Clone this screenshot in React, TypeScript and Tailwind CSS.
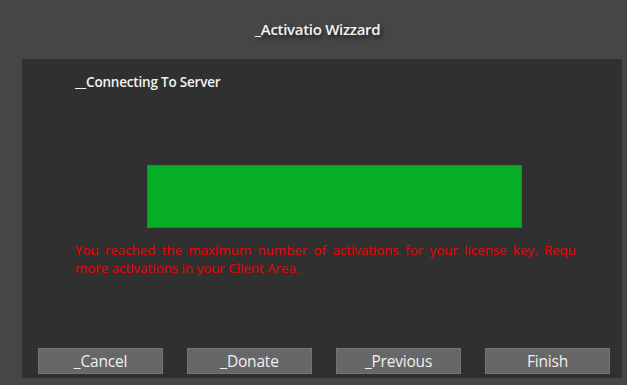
import React from 'react';

const buttons = ['_Cancel', '_Donate', '_Previous', 'Finish'];

export default function App() {
  return (
    <div
      className="w-[627px] h-[385px] bg-[#464646] flex flex-col overflow-hidden"
      style={{ fontFamily: '"Open Sans", "Noto Sans", sans-serif' }}
    >
      <div className="h-[59px] flex items-center justify-center pl-[8px]">
        <span className="text-[15px] font-semibold text-[#f4f4f4] [text-shadow:2px_3px_4px_rgba(0,0,0,0.6)] tracking-[-0.3px]">
          _Activatio Wizzard
        </span>
      </div>
      <div className="ml-[22px] w-[600px] h-[319px] bg-[#303030] flex flex-col">
        <div className="pl-[53px] pt-[14px] text-[13.5px] font-semibold text-[#f2f2f2] tracking-[-0.2px] leading-[18px]">
          __Connecting To Server
        </div>
        <div className="mt-[74px] ml-[125px] w-[375px] h-[63px] bg-[#05ae26] border border-[#3c7a44]" />
        <div className="mt-[13px] ml-[53px] w-[501px] text-[13.3px] text-[#f00000] leading-[18px]">
          <div className="whitespace-nowrap flex justify-between">
            {'You reached the maximum number of activations for your license key. Requ'.split(' ').map((w, i) => (
              <span key={i}>{w}</span>
            ))}
          </div>
          <div>more activations in your Client Area.</div>
        </div>
        <div className="mt-auto mb-[4px] pl-[16px] flex gap-[24px]">
          {buttons.map((b) => (
            <div
              key={b}
              className="w-[125px] h-[26px] pt-[2px] bg-[#676767] border border-[#747474] flex items-center justify-center text-[15.5px] text-[#f0f0f0] tracking-[-0.2px]"
            >
              {b}
            </div>
          ))}
        </div>
      </div>
    </div>
  );
}
